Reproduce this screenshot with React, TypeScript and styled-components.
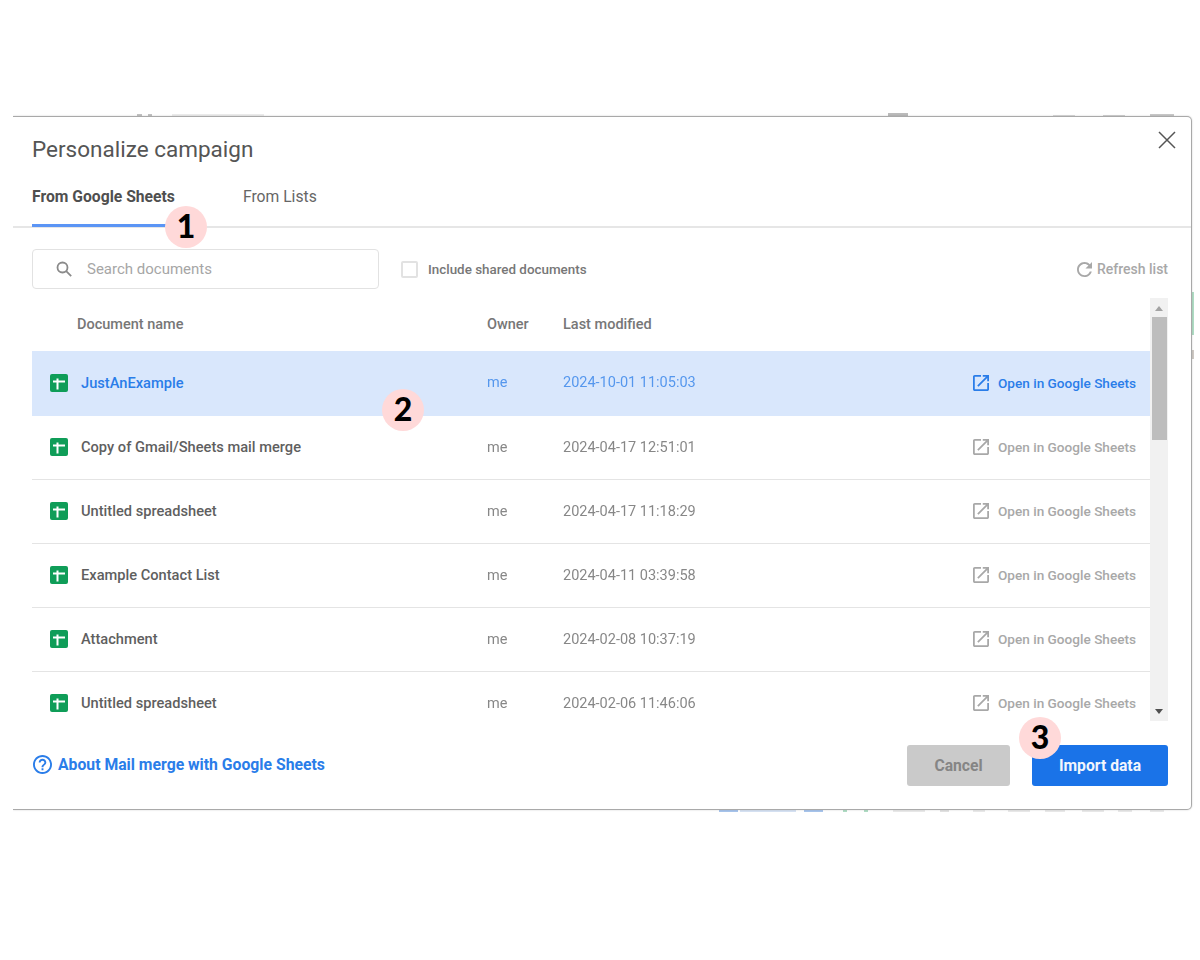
import { createGlobalStyle, styled } from "styled-components";

const GlobalStyle = createGlobalStyle`
  html, body {
    margin: 0;
    padding: 0;
    background: #fff;
  }
  body {
    font-family: Roboto, "Liberation Sans", sans-serif;
  }
`;

const docs = [
  { name: "JustAnExample", date: "2024-10-01 11:05:03", active: true },
  { name: "Copy of Gmail/Sheets mail merge", date: "2024-04-17 12:51:01" },
  { name: "Untitled spreadsheet", date: "2024-04-17 11:18:29" },
  { name: "Example Contact List", date: "2024-04-11 03:39:58" },
  { name: "Attachment", date: "2024-02-08 10:37:19" },
  { name: "Untitled spreadsheet", date: "2024-02-06 11:46:06" },
];

// bits of the mail page that stick out around the dialog
const peeks = [
  { x: 137, y: 114, w: 5, h: 3, color: "#9a9a9a" },
  { x: 148, y: 114, w: 4, h: 3, color: "#9a9a9a" },
  { x: 172, y: 114, w: 92, h: 3, color: "#e0e0e0" },
  { x: 888, y: 113, w: 20, h: 4, color: "#8f8f8f" },
  { x: 1053, y: 115, w: 22, h: 2, color: "#c4c4c4" },
  { x: 1103, y: 115, w: 22, h: 2, color: "#b5b5b5" },
  { x: 1150, y: 114, w: 24, h: 3, color: "#a5a5a5" },
  { x: 719, y: 809, w: 19, h: 3, color: "#6f9fe0" },
  { x: 740, y: 809, w: 56, h: 3, color: "#bcd0ec" },
  { x: 804, y: 809, w: 19, h: 3, color: "#6f9fe0" },
  { x: 843, y: 809, w: 4, h: 3, color: "#7cc7a0" },
  { x: 864, y: 809, w: 4, h: 3, color: "#7cc7a0" },
  { x: 893, y: 809, w: 32, h: 3, color: "#dcdcdc" },
  { x: 940, y: 809, w: 9, h: 3, color: "#d0d0d0" },
  { x: 973, y: 809, w: 12, h: 3, color: "#dcdcdc" },
  { x: 1008, y: 809, w: 22, h: 3, color: "#dcdcdc" },
  { x: 1045, y: 809, w: 20, h: 3, color: "#dcdcdc" },
  { x: 1082, y: 809, w: 22, h: 3, color: "#dcdcdc" },
  { x: 1118, y: 809, w: 14, h: 3, color: "#dcdcdc" },
  { x: 1150, y: 809, w: 14, h: 3, color: "#dcdcdc" },
  { x: 1190, y: 292, w: 4, h: 43, color: "#7cc7a0" },
  { x: 1190, y: 350, w: 4, h: 9, color: "#b0a8a0" },
];

const SheetIcon = () => (
  <svg width="18" height="18" viewBox="0 0 18 18">
    <rect width="18" height="18" rx="2" fill="#0f9d58" />
    <path d="M3 6.500h3.500V4.500h2v2H15v2H8.500v7h-2v-7H3z" fill="#fff" />
  </svg>
);

const OpenIcon = () => (
  <svg width="16" height="16" viewBox="3 3 18 18" fill="currentColor">
    <path d="M19 19H5V5h7V3H5c-1.110 0-2 .9-2 2v14c0 1.100.89 2 2 2h14c1.100 0 2-.9 2-2v-7h-2v7zM14 3v2h3.590l-9.830 9.830 1.410 1.410L19 6.410V10h2V3h-7z" />
  </svg>
);

const SearchIcon = () => (
  <svg width="18" height="18" viewBox="0 0 18 18" fill="none" stroke="#8a8a8a" strokeWidth="1.800">
    <circle cx="7.500" cy="7.500" r="5" />
    <path d="m11.200 11.200 5 5" />
  </svg>
);

const RefreshIcon = () => (
  <svg width="15" height="15" viewBox="4 4 16 16" fill="#a8a8a8">
    <path d="M17.650 6.350C16.200 4.900 14.210 4 12 4c-4.420 0-7.990 3.580-7.990 8s3.570 8 7.990 8c3.730 0 6.840-2.550 7.730-6h-2.080c-.82 2.330-3.040 4-5.650 4-3.310 0-6-2.690-6-6s2.690-6 6-6c1.660 0 3.140.69 4.220 1.780L13 11h7V4l-2.350 2.350z" />
  </svg>
);

const HelpIcon = () => (
  <svg width="19" height="19" viewBox="2 2 20 20" fill="currentColor">
    <path d="M11 18h2v-2h-2v2zm1-16C6.480 2 2 6.480 2 12s4.480 10 10 10 10-4.480 10-10S17.520 2 12 2zm0 18c-4.410 0-8-3.590-8-8s3.590-8 8-8 8 3.590 8 8-3.590 8-8 8zm0-14c-2.210 0-4 1.790-4 4h2c0-1.100.9-2 2-2s2 .9 2 2c0 2-3 1.750-3 5h2c0-2.250 3-2.500 3-5 0-2.210-1.790-4-4-4z" />
  </svg>
);

const CloseIcon = () => (
  <svg width="20" height="20" viewBox="0 0 20 20" fill="none" stroke="#555" strokeWidth="1.500">
    <path d="m2 2 16 16M18 2 2 18" />
  </svg>
);

const App = () => {
  return (
    <Page>
      <GlobalStyle />
      {peeks.map((p) => (
        <Peek key={`${p.x}-${p.y}`} x={p.x} y={p.y} w={p.w} h={p.h} color={p.color} />
      ))}
      <Modal>
        <CloseButton>
          <CloseIcon />
        </CloseButton>
        <Title>Personalize campaign</Title>
        <Tabs>
          <Tab active>From Google Sheets</Tab>
          <Tab>From Lists</Tab>
        </Tabs>
        <Toolbar>
          <SearchBox>
            <SearchIcon />
            <span>Search documents</span>
          </SearchBox>
          <Shared>
            <CheckBox />
            Include shared documents
          </Shared>
          <Refresh>
            <RefreshIcon />
            Refresh list
          </Refresh>
        </Toolbar>
        <ListArea>
          <List>
            <HeadRow>
              <span>Document name</span>
              <span>Owner</span>
              <span>Last modified</span>
            </HeadRow>
            {docs.map((doc) => (
              <Row key={doc.date} active={doc.active}>
                <NameCell>
                  <SheetIcon />
                  {doc.name}
                </NameCell>
                <Meta>me</Meta>
                <Meta>{doc.date}</Meta>
                <OpenLink active={doc.active}>
                  <OpenIcon />
                  Open in Google Sheets
                </OpenLink>
              </Row>
            ))}
          </List>
          <ScrollTrack>
            <ArrowUp />
            <Thumb />
            <ArrowDown />
          </ScrollTrack>
        </ListArea>
        <Footer>
          <HelpLink>
            <HelpIcon />
            About Mail merge with Google Sheets
          </HelpLink>
          <Buttons>
            <CancelButton>Cancel</CancelButton>
            <ImportButton>Import data</ImportButton>
          </Buttons>
        </Footer>
      </Modal>
      <Badge x={186} y={227}>1</Badge>
      <Badge x={403} y={410}>2</Badge>
      <Badge x={1040} y={738}>3</Badge>
    </Page>
  );
};

export default App;

const Page = styled.div`
  position: relative;
  height: 960px;
  padding: 116px 8px 0 13px;
  box-sizing: border-box;
  overflow: hidden;
`;

const Peek = styled.div<{ x: number; y: number; w: number; h: number; color: string }>`
  position: absolute;
  left: ${(props) => props.x}px;
  top: ${(props) => props.y}px;
  width: ${(props) => props.w}px;
  height: ${(props) => props.h}px;
  background: ${(props) => props.color};
  opacity: 0.6;
  filter: blur(0.7px);
`;

const Modal = styled.div`
  position: relative;
  z-index: 1;
  height: 694px;
  box-sizing: border-box;
  display: flex;
  flex-direction: column;
  background: #fff;
  border: 1px solid #a9a9a9;
  border-left: none;
  border-radius: 0 5px 5px 0;
  box-shadow: 0 0 2px rgba(0, 0, 0, 0.2);
  clip-path: inset(-3px -3px -3px 0);
`;

const CloseButton = styled.div`
  position: absolute;
  top: 13px;
  right: 14px;
  width: 20px;
  height: 20px;
`;

const Title = styled.h1`
  margin: 0;
  padding: 18px 0 0 19px;
  height: 46px;
  box-sizing: border-box;
  font-size: 22.500px;
  line-height: 28px;
  font-weight: 400;
  color: #555;
`;

const Tabs = styled.div`
  display: flex;
  gap: 68px;
  height: 65px;
  padding-left: 19px;
  box-sizing: border-box;
  border-bottom: 2px solid #e6e6e6;
`;

const Tab = styled.div<{ active?: boolean }>`
  height: 64px;
  box-sizing: border-box;
  padding-top: 25px;
  font-size: 15.700px;
  line-height: 18px;
  font-weight: ${(props) => (props.active ? 700 : 400)};
  color: ${(props) => (props.active ? "#4f4f4f" : "#666")};
  border-bottom: ${(props) => (props.active ? "3px solid #5b95f5" : "none")};
`;

const Toolbar = styled.div`
  display: flex;
  align-items: center;
  height: 70px;
  box-sizing: border-box;
  padding: 12px 23px 0 19px;
`;

const SearchBox = styled.div`
  display: flex;
  align-items: center;
  gap: 14px;
  width: 347px;
  height: 40px;
  padding-left: 22px;
  box-sizing: border-box;
  border: 1px solid #e2e2e2;
  border-radius: 4px;
  font-size: 15px;
  color: #a6a6a6;
`;

const Shared = styled.label`
  display: flex;
  align-items: center;
  gap: 10px;
  margin-left: 22px;
  font-size: 13.400px;
  font-weight: 500;
  color: #777;
`;

const CheckBox = styled.span`
  width: 17px;
  height: 17px;
  box-sizing: border-box;
  border: 2px solid #e2e2e2;
  border-radius: 2px;
`;

const Refresh = styled.div`
  display: flex;
  align-items: center;
  gap: 5px;
  margin-left: auto;
  font-size: 14px;
  font-weight: 500;
  color: #a8a8a8;
`;

const ListArea = styled.div`
  display: flex;
  height: 423px;
  padding: 0 23px 0 19px;
`;

const List = styled.div`
  flex: 1;
  overflow: hidden;
`;

const HeadRow = styled.div`
  display: grid;
  grid-template-columns: 410px 76px 1fr;
  align-items: center;
  height: 53px;
  padding-left: 45px;
  font-size: 14.500px;
  font-weight: 500;
  color: #777;
`;

const Row = styled.div<{ active?: boolean }>`
  display: grid;
  grid-template-columns: 437px 76px 1fr auto;
  align-items: center;
  height: ${(props) => (props.active ? 65 : 64)}px;
  box-sizing: border-box;
  padding: 0 14px 0 18px;
  color: ${(props) => (props.active ? "#2a7de9" : "#5f5f5f")};
  background: ${(props) => (props.active ? "#d9e7fc" : "#fff")};
  border-bottom: 1px solid ${(props) => (props.active ? "#d9e7fc" : "#e4e4e4")};
`;

const NameCell = styled.div`
  display: flex;
  align-items: center;
  gap: 13px;
  margin-bottom: 1px;
  font-size: 14.650px;
  font-weight: 500;
`;

const Meta = styled.div`
  margin-bottom: 1px;
  font-size: 14.500px;
  opacity: 0.75;
`;

const OpenLink = styled.div<{ active?: boolean }>`
  display: flex;
  align-items: center;
  gap: 9px;
  margin-bottom: 1px;
  font-size: 13.600px;
  font-weight: 500;
  color: ${(props) => (props.active ? "#2a7de9" : "#a8a8a8")};
`;

const ScrollTrack = styled.div`
  display: flex;
  flex-direction: column;
  align-items: center;
  width: 18px;
  height: 423px;
  flex-shrink: 0;
  background: #f1f1f1;
`;

const ArrowUp = styled.div`
  width: 0;
  height: 0;
  margin: 8px 0 6px;
  border-left: 4px solid transparent;
  border-right: 4px solid transparent;
  border-bottom: 5px solid #a3a3a3;
`;

const Thumb = styled.div`
  width: 15px;
  height: 123px;
  background: #bdbdbd;
`;

const ArrowDown = styled.div`
  width: 0;
  height: 0;
  margin-top: auto;
  margin-bottom: 7px;
  border-left: 4px solid transparent;
  border-right: 4px solid transparent;
  border-top: 5px solid #505050;
`;

const Footer = styled.div`
  display: flex;
  align-items: flex-start;
  justify-content: space-between;
  padding: 24px 23px 0 19px;
`;

const HelpLink = styled.div`
  display: flex;
  align-items: center;
  gap: 6px;
  margin: 10px 0 0 1px;
  font-size: 15.750px;
  font-weight: 700;
  color: #2a7de9;
`;

const Buttons = styled.div`
  display: flex;
  gap: 22px;
`;

const CancelButton = styled.div`
  display: flex;
  align-items: center;
  justify-content: center;
  width: 103px;
  height: 41px;
  border-radius: 3px;
  background: #cacaca;
  color: #858585;
  font-size: 15.700px;
  font-weight: 700;
`;

const ImportButton = styled(CancelButton)`
  width: 136px;
  background: #1a73e8;
  color: #f2f6fd;
`;

const Badge = styled.div<{ x: number; y: number }>`
  position: absolute;
  z-index: 2;
  left: ${(props) => props.x - 21}px;
  top: ${(props) => props.y - 21}px;
  width: 42px;
  height: 42px;
  padding-bottom: 4px;
  box-sizing: border-box;
  display: flex;
  align-items: center;
  justify-content: center;
  border-radius: 50%;
  background: #ffd9d9;
  color: #000;
  font-family: Lato, sans-serif;
  font-size: 32px;
  font-weight: 900;
`;
